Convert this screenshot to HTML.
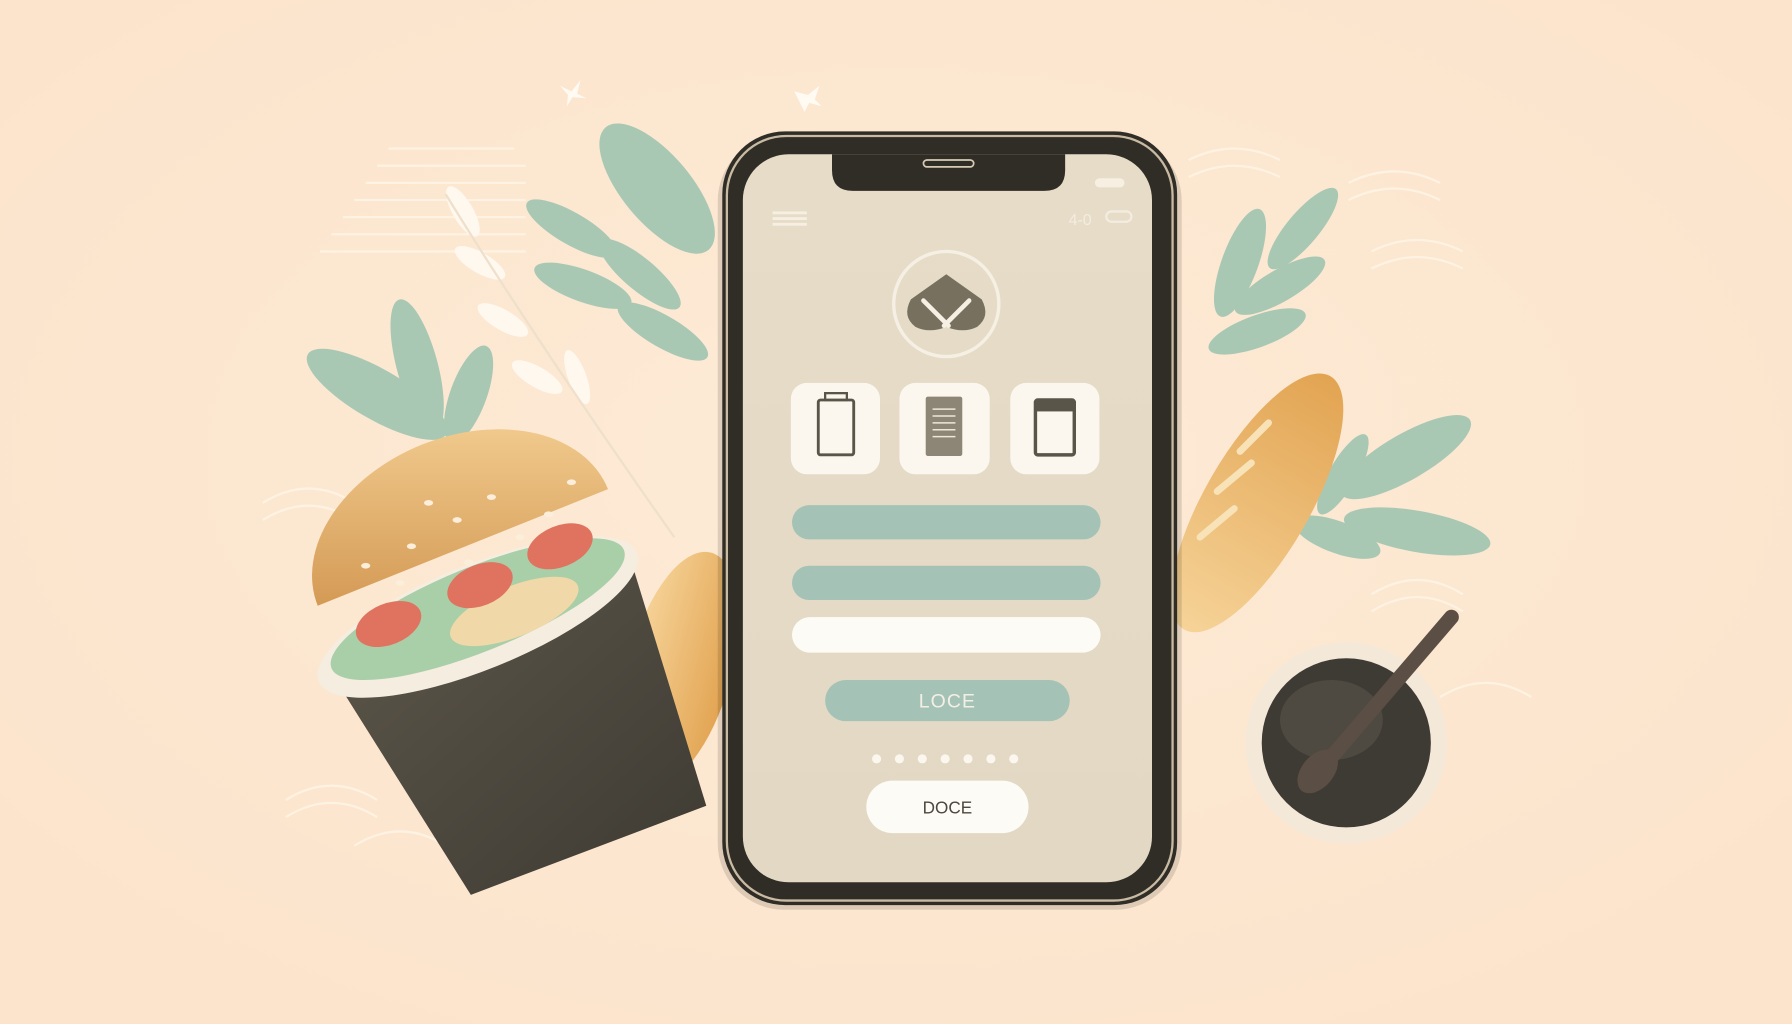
<!DOCTYPE html>
<html><head><meta charset="utf-8"><style>
html,body{margin:0;padding:0;background:#fde8d2;}
svg{display:block;}
</style></head><body>
<svg width="1792" height="1024" viewBox="0 0 1568 896" xmlns="http://www.w3.org/2000/svg">
<defs>
<radialGradient id="bg" cx="50%" cy="45%" r="70%"><stop offset="0" stop-color="#fdebd6"/><stop offset="1" stop-color="#fce3cb"/></radialGradient>
<linearGradient id="bun" x1="0" y1="0" x2="0" y2="1"><stop offset="0" stop-color="#f0c98c"/><stop offset="1" stop-color="#d49a55"/></linearGradient>
<linearGradient id="bread" x1="0" y1="0" x2="1" y2="0"><stop offset="0" stop-color="#f6d398"/><stop offset="1" stop-color="#e2a452"/></linearGradient>
<linearGradient id="cup" x1="0" y1="0" x2="1" y2="1"><stop offset="0" stop-color="#5d574a"/><stop offset="1" stop-color="#3d3a33"/></linearGradient>
<linearGradient id="scr" x1="0" y1="0" x2="0" y2="1"><stop offset="0" stop-color="#e6dcc8"/><stop offset="1" stop-color="#e2d8c4"/></linearGradient>
</defs>
<rect width="1568" height="896" fill="url(#bg)"/>
<g stroke="#fff6ea" stroke-width="2" fill="none" opacity="0.7">
<path d="M340 130h110M330 145h130M320 160h140M310 175h150M300 190h160M290 205h170M280 220h180"/>
<path d="M1040 140q40-20 80 0M1040 155q40-20 80 0M1180 160q40-20 80 0M1180 175q40-20 80 0M1200 220q40-20 80 0M1200 235q40-20 80 0"/>
<path d="M230 440q40-25 80 0M230 455q40-25 80 0M250 700q40-25 80 0M250 715q40-25 80 0M310 740q40-25 80 0M1200 520q40-25 80 0M1200 535q40-25 80 0M1260 610q40-25 80 0"/>
</g>
<g fill="#a8c8b4">
<ellipse cx="575" cy="165" rx="70" ry="30" transform="rotate(50 575 165)"/>
<ellipse cx="500" cy="200" rx="45" ry="14" transform="rotate(30 500 200)"/>
<ellipse cx="510" cy="250" rx="45" ry="14" transform="rotate(20 510 250)"/>
<ellipse cx="560" cy="240" rx="45" ry="14" transform="rotate(40 560 240)"/>
<ellipse cx="580" cy="290" rx="45" ry="14" transform="rotate(30 580 290)"/>
<ellipse cx="330" cy="345" rx="70" ry="22" transform="rotate(30 330 345)"/>
<ellipse cx="365" cy="320" rx="60" ry="18" transform="rotate(75 365 320)"/>
<ellipse cx="410" cy="345" rx="45" ry="16" transform="rotate(110 410 345)"/>
<ellipse cx="1085" cy="230" rx="50" ry="16" transform="rotate(-70 1085 230)"/>
<ellipse cx="1140" cy="200" rx="45" ry="14" transform="rotate(-50 1140 200)"/>
<ellipse cx="1120" cy="250" rx="45" ry="14" transform="rotate(-30 1120 250)"/>
<ellipse cx="1100" cy="290" rx="45" ry="14" transform="rotate(-20 1100 290)"/>
<ellipse cx="1230" cy="400" rx="65" ry="20" transform="rotate(-30 1230 400)"/>
<ellipse cx="1240" cy="465" rx="65" ry="18" transform="rotate(10 1240 465)"/>
<ellipse cx="1170" cy="470" rx="40" ry="14" transform="rotate(20 1170 470)"/>
<ellipse cx="1175" cy="415" rx="40" ry="12" transform="rotate(-60 1175 415)"/>
</g>
<g fill="#fffaf2" opacity="0.9">
<ellipse cx="405" cy="185" rx="25" ry="9" transform="rotate(60 405 185)"/>
<ellipse cx="420" cy="230" rx="25" ry="9" transform="rotate(30 420 230)"/>
<ellipse cx="440" cy="280" rx="25" ry="9" transform="rotate(30 440 280)"/>
<ellipse cx="470" cy="330" rx="25" ry="9" transform="rotate(30 470 330)"/>
<ellipse cx="505" cy="330" rx="25" ry="8" transform="rotate(70 505 330)"/>
</g>
<path d="M390 170Q470 300 590 470" stroke="#efe0cc" stroke-width="2" fill="none"/>
<ellipse cx="1100" cy="440" rx="128" ry="46" transform="rotate(-60 1100 440)" fill="url(#bread)"/>
<g stroke="#f8e2b8" stroke-width="6" fill="none" stroke-linecap="round"><path d="M1050 470l30-25M1065 430l30-25M1085 395l25-25"/></g>
<ellipse cx="595" cy="585" rx="45" ry="105" transform="rotate(15 595 585)" fill="url(#bread)"/>
<polygon points="300,605 555,500 618,705 412,783" fill="url(#cup)"/>
<ellipse cx="418" cy="540" rx="150" ry="46" transform="rotate(-22 418 540)" fill="#f5ede0"/>
<ellipse cx="418" cy="533" rx="138" ry="37" transform="rotate(-22 418 533)" fill="#a9cfa8"/>
<ellipse cx="450" cy="535" rx="60" ry="22" transform="rotate(-22 450 535)" fill="#f0d8a8"/>
<ellipse cx="340" cy="546" rx="30" ry="18" transform="rotate(-22 340 546)" fill="#e0735f"/>
<ellipse cx="420" cy="512" rx="30" ry="18" transform="rotate(-22 420 512)" fill="#e0735f"/>
<ellipse cx="490" cy="478" rx="30" ry="18" transform="rotate(-22 490 478)" fill="#e0735f"/>
<path d="M278 530 A130 92 -22 0 1 532 428 Z" fill="url(#bun)"/>
<g fill="#fbeedb"><ellipse cx="320" cy="495" rx="4" ry="2.5"/><ellipse cx="360" cy="478" rx="4" ry="2.5"/><ellipse cx="400" cy="455" rx="4" ry="2.5"/><ellipse cx="430" cy="435" rx="4" ry="2.5"/><ellipse cx="375" cy="440" rx="4" ry="2.5"/><ellipse cx="455" cy="470" rx="4" ry="2.5"/><ellipse cx="480" cy="450" rx="4" ry="2.5"/><ellipse cx="500" cy="422" rx="4" ry="2.5"/><ellipse cx="410" cy="492" rx="4" ry="2.5"/><ellipse cx="350" cy="510" rx="4" ry="2.5"/></g>
<circle cx="1178" cy="650" r="88" fill="#f4e8d8"/>
<circle cx="1178" cy="650" r="74" fill="#3e3a34"/>
<ellipse cx="1165" cy="630" rx="45" ry="35" fill="#5a554d" opacity="0.6"/>
<line x1="1150" y1="680" x2="1270" y2="540" stroke="#5b4e44" stroke-width="13" stroke-linecap="round"/>
<ellipse cx="1153" cy="675" rx="22" ry="14" transform="rotate(-50 1153 675)" fill="#5b4e44"/>
<rect x="628" y="118" width="406" height="678" rx="58" fill="#000" opacity="0.12"/>
<rect x="632" y="115" width="398" height="677" rx="55" fill="#2f2d26"/>
<rect x="636" y="119" width="390" height="669" rx="52" fill="none" stroke="#c9bba3" stroke-width="2"/>
<rect x="650" y="135" width="358" height="637" rx="40" fill="url(#scr)"/>
<path d="M728 135h204v14q0 18-18 18h-168q-18 0-18-18z" fill="#2f2d26"/>
<rect x="808" y="140" width="44" height="6" rx="3" fill="none" stroke="#d8cbb5" stroke-width="1.5"/>
<g fill="#f6efe2"><rect x="676" y="185" width="30" height="2.5"/><rect x="676" y="190" width="30" height="2.5"/><rect x="676" y="195" width="30" height="2.5"/><rect x="958" y="156" width="26" height="8" rx="4"/></g>
<text x="935" y="197" font-family="Liberation Sans,sans-serif" font-size="14" fill="#f4ece0">4-0</text>
<rect x="968" y="185" width="22" height="9" rx="4.5" fill="none" stroke="#f4ece0" stroke-width="2"/>
<circle cx="828" cy="266" r="46" fill="none" stroke="#f6efe3" stroke-width="3"/>
<path d="M797 262l31-22 31 22q8 15-4 24-12 6-27 0-15 6-27 0-12-9-4-24z" fill="#77705f"/>
<path d="M808 263l22 22M848 263l-22 22" stroke="#f6efe3" stroke-width="4" stroke-linecap="round"/>
<g fill="#fbf7ee"><rect x="692" y="335" width="78" height="80" rx="14"/><rect x="787" y="335" width="79" height="80" rx="14"/><rect x="884" y="335" width="78" height="80" rx="14"/></g>
<rect x="716" y="350" width="31" height="48" rx="2" fill="none" stroke="#5a5549" stroke-width="2.5"/>
<rect x="722" y="344" width="19" height="6" fill="none" stroke="#5a5549" stroke-width="2"/>
<rect x="810" y="347" width="32" height="52" rx="2" fill="#8d8677"/>
<g stroke="#eee6d6" stroke-width="1.3"><path d="M816 358h20M816 364h20M816 370h20M816 376h20M816 382h20"/></g>
<rect x="906" y="350" width="34" height="48" rx="2" fill="none" stroke="#5a5549" stroke-width="3"/>
<rect x="906" y="350" width="34" height="10" fill="#5a5549"/>
<rect x="693" y="442" width="270" height="30" rx="15" fill="#a4c3b6"/>
<rect x="693" y="495" width="270" height="30" rx="15" fill="#a4c3b6"/>
<rect x="693" y="540" width="270" height="31" rx="15.5" fill="#fdfbf6"/>
<rect x="722" y="595" width="214" height="36" rx="18" fill="#a4c3b6"/>
<text x="829" y="619" text-anchor="middle" font-family="Liberation Sans,sans-serif" font-size="17" fill="#f4efe6" letter-spacing="1">LOCE</text>
<g fill="#fbf7ee"><circle cx="767" cy="664" r="4"/><circle cx="787" cy="664" r="4"/><circle cx="807" cy="664" r="4"/><circle cx="827" cy="664" r="4"/><circle cx="847" cy="664" r="4"/><circle cx="867" cy="664" r="4"/><circle cx="887" cy="664" r="4"/></g>
<rect x="758" y="683" width="142" height="46" rx="23" fill="#fdfbf6"/>
<text x="829" y="712" text-anchor="middle" font-family="Liberation Sans,sans-serif" font-size="15" fill="#4c483f">DOCE</text>
<path d="M490 75l10 5 8-10-3 12 8 4-12-1-5 8 1-10z" fill="#fffaf2"/>
<path d="M695 80l12 3 10-8-4 12 6 6-11-3-4 8z" fill="#fffaf2"/>
</svg>
</body></html>
